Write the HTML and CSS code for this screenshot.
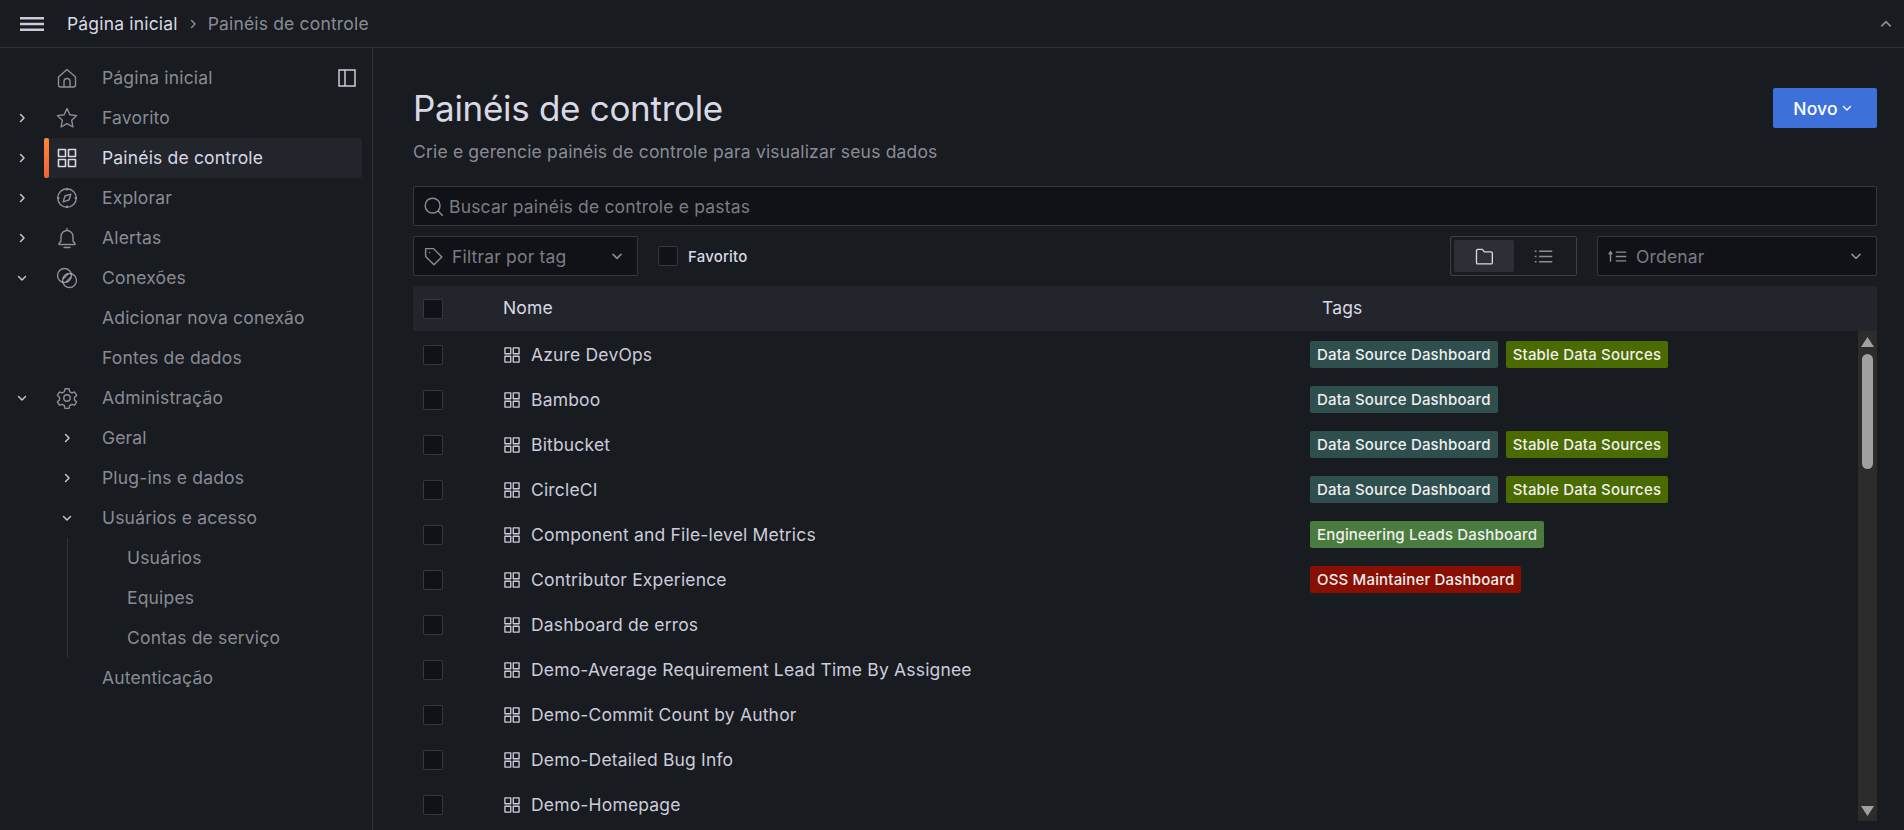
FILE: index.html
```html
<!DOCTYPE html>
<html lang="pt-BR">
  <head>
    <meta charset="UTF-8" />
    <title>Painéis de controle</title>
    <link rel="stylesheet" href="styles.css">
  </head>
  <body>
    <svg class="defs" width="0" height="0">
      <symbol id="i-apps" viewBox="0 0 24 24"><path d="M3.500 3.500h7v7h-7zM13.500 3.500h7v7h-7zM3.500 13.500h7v7h-7zM13.500 13.500h7v7h-7z" fill="none" stroke="currentColor" stroke-width="1.600" stroke-linejoin="round"/></symbol>
      <symbol id="i-right" viewBox="0 0 24 24"><path d="M9.500 6l6 6-6 6" fill="none" stroke="currentColor" stroke-width="2.400" stroke-linecap="round" stroke-linejoin="round"/></symbol>
      <symbol id="i-down" viewBox="0 0 24 24"><path d="M6 9.500l6 6 6-6" fill="none" stroke="currentColor" stroke-width="2.400" stroke-linecap="round" stroke-linejoin="round"/></symbol>
    </svg>

    <header class="topbar">
      <svg class="burger" viewBox="0 0 24 14"><path d="M0 1.200h24M0 7h24M0 12.800h24" stroke="currentColor" stroke-width="2.400"/></svg>
      <span class="crumb">Página inicial</span>
      <svg class="crumb_sep"><use href="#i-right"/></svg>
      <span class="crumb crumb_last">Painéis de controle</span>
      <svg class="collapse" viewBox="0 0 24 24"><path d="M5 15.500l7-7 7 7" fill="none" stroke="currentColor" stroke-width="2.600"/></svg>
    </header>

    <div class="layout">
      <nav class="sidebar">
        <div class="nav_item">
          <span class="nav_arrow"></span>
          <svg class="nav_icon" viewBox="0 0 24 24"><path d="M3.500 11l8.500-7.500 8.500 7.500v8a2 2 0 0 1-2 2h-13a2 2 0 0 1-2-2zM9 21v-5.500a3 3 0 0 1 6 0V21" fill="none" stroke="currentColor" stroke-width="1.400" stroke-linejoin="round"/></svg>
          <span class="nav_text">Página inicial</span>
          <svg class="dock" viewBox="0 0 18 18"><path d="M1 1h16v16H1zM7 1v16" fill="none" stroke="currentColor" stroke-width="1.500"/></svg>
        </div>
        <div class="nav_item">
          <svg class="nav_arrow"><use href="#i-right"/></svg>
          <svg class="nav_icon" viewBox="0 0 24 24"><path d="M12 2.500l2.900 6.200 6.700.9-4.900 4.700 1.200 6.700-5.900-3.300-5.900 3.300 1.200-6.700-4.900-4.700 6.700-.9z" fill="none" stroke="currentColor" stroke-width="1.400" stroke-linejoin="round"/></svg>
          <span class="nav_text">Favorito</span>
        </div>
        <div class="nav_item active">
          <svg class="nav_arrow"><use href="#i-right"/></svg>
          <svg class="nav_icon"><use href="#i-apps"/></svg>
          <span class="nav_text">Painéis de controle</span>
        </div>
        <div class="nav_item">
          <svg class="nav_arrow"><use href="#i-right"/></svg>
          <svg class="nav_icon" viewBox="0 0 24 24"><circle cx="12" cy="12" r="9.300" fill="none" stroke="currentColor" stroke-width="1.400"/><path d="M15.800 8.200l-1.800 5.800-5.800 1.800 1.800-5.800z" fill="none" stroke="currentColor" stroke-width="1.400" stroke-linejoin="round"/><path d="M12 2.500v2M12 19.500v2M2.500 12h2M19.500 12h2" stroke="currentColor" stroke-width="1.400"/></svg>
          <span class="nav_text">Explorar</span>
        </div>
        <div class="nav_item">
          <svg class="nav_arrow"><use href="#i-right"/></svg>
          <svg class="nav_icon" viewBox="0 0 24 24"><path d="M12 4.500a6 6 0 0 0-6 6V15l-2 2.500v1h16v-1L18 15v-4.500a6 6 0 0 0-6-6zM12 2.500v2M9 21.500h6" fill="none" stroke="currentColor" stroke-width="1.400" stroke-linejoin="round" stroke-linecap="round"/></svg>
          <span class="nav_text">Alertas</span>
        </div>
        <div class="nav_item">
          <svg class="nav_arrow"><use href="#i-down"/></svg>
          <svg class="nav_icon" viewBox="0 0 24 24"><circle cx="9.500" cy="9.500" r="7" fill="none" stroke="currentColor" stroke-width="1.400"/><circle cx="14.500" cy="14.500" r="7" fill="none" stroke="currentColor" stroke-width="1.400"/><path d="M8 13l5-5M11 16l5-5" stroke="currentColor" stroke-width="1.400"/></svg>
          <span class="nav_text">Conexões</span>
        </div>
        <div class="nav_item"><span class="nav_arrow"></span><span class="nav_icon"></span><span class="nav_text">Adicionar nova conexão</span></div>
        <div class="nav_item"><span class="nav_arrow"></span><span class="nav_icon"></span><span class="nav_text">Fontes de dados</span></div>
        <div class="nav_item">
          <svg class="nav_arrow"><use href="#i-down"/></svg>
          <svg class="nav_icon" viewBox="0 0 24 24"><circle cx="12" cy="12" r="3.200" fill="none" stroke="currentColor" stroke-width="1.400"/><path d="M10 2.800h4l.6 2.800 2.300 1.300 2.700-.9 2 3.400-2.100 1.900v2.600l2.100 1.900-2 3.400-2.700-.9-2.300 1.300-.6 2.800h-4l-.6-2.800-2.300-1.300-2.700.9-2-3.400 2.100-1.900v-2.600l-2.100-1.900 2-3.400 2.700.9 2.300-1.300z" fill="none" stroke="currentColor" stroke-width="1.400" stroke-linejoin="round"/></svg>
          <span class="nav_text">Administração</span>
        </div>
        <div class="nav_item"><span class="nav_arrow"></span><svg class="nav_icon sub_arrow"><use href="#i-right"/></svg><span class="nav_text">Geral</span></div>
        <div class="nav_item"><span class="nav_arrow"></span><svg class="nav_icon sub_arrow"><use href="#i-right"/></svg><span class="nav_text">Plug-ins e dados</span></div>
        <div class="nav_item"><span class="nav_arrow"></span><svg class="nav_icon sub_arrow"><use href="#i-down"/></svg><span class="nav_text">Usuários e acesso</span></div>
        <div class="nav_group">
          <div class="nav_item deep"><span class="nav_text">Usuários</span></div>
          <div class="nav_item deep"><span class="nav_text">Equipes</span></div>
          <div class="nav_item deep"><span class="nav_text">Contas de serviço</span></div>
        </div>
        <div class="nav_item"><span class="nav_arrow"></span><span class="nav_icon"></span><span class="nav_text">Autenticação</span></div>
      </nav>

      <main class="content">
        <div class="page_head">
          <div>
            <h1>Painéis de controle</h1>
            <p>Crie e gerencie painéis de controle para visualizar seus dados</p>
          </div>
          <button class="btn_new" type="button">Novo <svg><use href="#i-down"/></svg></button>
        </div>

        <div class="search field">
          <svg class="field_icon" viewBox="0 0 24 24"><circle cx="11" cy="11" r="8.500" fill="none" stroke="currentColor" stroke-width="1.600"/><path d="M17.500 17.500L22 22" stroke="currentColor" stroke-width="1.600" stroke-linecap="round"/></svg>
          <span class="placeholder">Buscar painéis de controle e pastas</span>
        </div>

        <div class="filters">
          <div class="tag_filter field">
            <svg class="field_icon" viewBox="0 0 24 24"><path d="M3 3h9l9.500 9.500-9 9L3 12zM7.500 7.500h.01" fill="none" stroke="currentColor" stroke-width="1.600" stroke-linejoin="round" stroke-linecap="round"/></svg>
            <span class="placeholder">Filtrar por tag</span>
            <svg class="field_caret"><use href="#i-down"/></svg>
          </div>
          <span class="check"></span>
          <span class="fav_label">Favorito</span>
          <div class="view_toggle">
            <span class="view_btn on"><svg class="folder" viewBox="0 0 24 24"><path d="M3 5.500A1.500 1.500 0 0 1 4.500 4H10l2.500 3h8A1.500 1.500 0 0 1 22 8.500V20a1.500 1.500 0 0 1-1.500 1.500h-16A1.500 1.500 0 0 1 3 20z" fill="none" stroke="currentColor" stroke-width="1.600" stroke-linejoin="round"/></svg></span>
            <span class="view_btn"><svg viewBox="0 0 24 24"><path d="M7 6h15M7 12h15M7 18h15M2 6h2M2 12h2M2 18h2" stroke="currentColor" stroke-width="1.600"/></svg></span>
          </div>
          <div class="sort field">
            <svg class="field_icon" viewBox="0 0 24 24"><path d="M4 18V7M2 9.500L4 6.500 6 9.500M10 7h12M10 12h12M10 17h12" fill="none" stroke="currentColor" stroke-width="1.600"/></svg>
            <span class="placeholder">Ordenar</span>
            <svg class="field_caret"><use href="#i-down"/></svg>
          </div>
        </div>

        <div class="table">
          <div class="table_head">
            <span class="row_check"><span class="check"></span></span>
            <span class="head_name">Nome</span>
            <span class="head_tags">Tags</span>
          </div>
          <div class="table_body">
            <div class="rows">
              <div class="row"><span class="row_check"><span class="check"></span></span><span class="row_name"><svg><use href="#i-apps"/></svg>Azure DevOps</span><span class="row_tags"><span class="tag tag_source">Data Source Dashboard</span><span class="tag tag_stable">Stable Data Sources</span></span></div>
              <div class="row"><span class="row_check"><span class="check"></span></span><span class="row_name"><svg><use href="#i-apps"/></svg>Bamboo</span><span class="row_tags"><span class="tag tag_source">Data Source Dashboard</span></span></div>
              <div class="row"><span class="row_check"><span class="check"></span></span><span class="row_name"><svg><use href="#i-apps"/></svg>Bitbucket</span><span class="row_tags"><span class="tag tag_source">Data Source Dashboard</span><span class="tag tag_stable">Stable Data Sources</span></span></div>
              <div class="row"><span class="row_check"><span class="check"></span></span><span class="row_name"><svg><use href="#i-apps"/></svg>CircleCI</span><span class="row_tags"><span class="tag tag_source">Data Source Dashboard</span><span class="tag tag_stable">Stable Data Sources</span></span></div>
              <div class="row"><span class="row_check"><span class="check"></span></span><span class="row_name"><svg><use href="#i-apps"/></svg>Component and File-level Metrics</span><span class="row_tags"><span class="tag tag_leads">Engineering Leads Dashboard</span></span></div>
              <div class="row"><span class="row_check"><span class="check"></span></span><span class="row_name"><svg><use href="#i-apps"/></svg>Contributor Experience</span><span class="row_tags"><span class="tag tag_oss">OSS Maintainer Dashboard</span></span></div>
              <div class="row"><span class="row_check"><span class="check"></span></span><span class="row_name"><svg><use href="#i-apps"/></svg>Dashboard de erros</span></div>
              <div class="row"><span class="row_check"><span class="check"></span></span><span class="row_name"><svg><use href="#i-apps"/></svg>Demo-Average Requirement Lead Time By Assignee</span></div>
              <div class="row"><span class="row_check"><span class="check"></span></span><span class="row_name"><svg><use href="#i-apps"/></svg>Demo-Commit Count by Author</span></div>
              <div class="row"><span class="row_check"><span class="check"></span></span><span class="row_name"><svg><use href="#i-apps"/></svg>Demo-Detailed Bug Info</span></div>
              <div class="row"><span class="row_check"><span class="check"></span></span><span class="row_name"><svg><use href="#i-apps"/></svg>Demo-Homepage</span></div>
            </div>
            <div class="scrollbar">
              <svg class="scroll_arrow" viewBox="0 0 13 10"><path d="M6.500 0L13 10H0z" fill="currentColor"/></svg>
              <span class="scroll_thumb"></span>
              <svg class="scroll_arrow scroll_down" viewBox="0 0 13 10"><path d="M0 0h13L6.500 10z" fill="currentColor"/></svg>
            </div>
          </div>
        </div>
      </main>
    </div>
  </body>
</html>
```

FILE: styles.css
```css
* {
  box-sizing: border-box;
}

html,
body {
  height: 100%;
}

body {
  margin: 0;
  overflow: hidden;
  background-color: rgb(24, 27, 31);
  color: rgb(204, 204, 220);
  font-family: Inter, "Noto Sans", sans-serif;
  font-size: 17.5px;
  letter-spacing: 0.01em;
}

.defs {
  position: absolute;
}

svg {
  display: block;
  flex: none;
}

/* top bar */
.topbar {
  display: flex;
  align-items: center;
  height: 48px;
  padding: 0 10px 0 20px;
  border-bottom: 1px solid rgba(204, 204, 220, 0.12);
}

.burger {
  width: 24px;
  height: 14px;
  margin-right: 23px;
}

.crumb {
  color: rgb(217, 217, 230);
}

.crumb_last {
  color: rgba(204, 204, 220, 0.65);
}

.crumb_sep {
  width: 14px;
  height: 14px;
  margin: 0 8px 0 8px;
  color: rgba(204, 204, 220, 0.65);
}

.collapse {
  width: 16px;
  height: 16px;
  margin-left: auto;
  color: rgba(204, 204, 220, 0.65);
}

.layout {
  display: flex;
  height: calc(100% - 48px);
}

/* side menu */
.sidebar {
  width: 373px;
  flex: none;
  padding: 10px 10px 0 0;
  border-right: 1px solid rgba(204, 204, 220, 0.12);
  color: rgba(204, 204, 220, 0.65);
}

.nav_item {
  position: relative;
  display: flex;
  align-items: center;
  height: 40px;
  margin-left: 15px;
  border-radius: 2px;
}

.nav_text {
  margin-bottom: 2px;
}

.nav_arrow {
  width: 14px;
  height: 14px;
  margin-right: 26px;
  color: rgb(204, 204, 220);
}

.nav_icon {
  width: 24px;
  height: 24px;
  margin-right: 23px;
}

.sub_arrow {
  padding: 5px;
  color: rgb(204, 204, 220);
}

.dock {
  width: 18px;
  height: 18px;
  margin-left: auto;
  margin-right: 6px;
  color: rgb(204, 204, 220);
}

.nav_item.active {
  margin-left: 44px;
  background-color: rgb(34, 37, 43);
  color: rgb(217, 217, 230);
}

.nav_item.active .nav_arrow {
  position: absolute;
  left: -29px;
}

.nav_item.active .nav_icon {
  margin-left: 11px;
}

.nav_item.active::before {
  content: "";
  width: 5px;
  height: 100%;
  position: absolute;
  left: 0;
  border-radius: 2px;
  background-image: linear-gradient(0deg, rgb(245, 95, 62), rgb(255, 136, 51));
}

.nav_group {
  margin-left: 67px;
  border-left: 1px solid rgba(204, 204, 220, 0.12);
}

.nav_item.deep {
  margin-left: 0;
  padding-left: 59px;
}

/* page */
.content {
  flex: 1;
  min-width: 0;
  display: flex;
  flex-direction: column;
  padding: 0 27px 9px 40px;
}

.page_head {
  display: flex;
  justify-content: space-between;
  height: 138px;
  padding-top: 39px;
}

h1 {
  margin: 0;
  font-size: 35px;
  font-weight: 400;
  line-height: 42px;
  letter-spacing: -0.3px;
  color: rgb(217, 217, 230);
}

.page_head p {
  margin: 12px 0 0;
  line-height: 22px;
  color: rgba(204, 204, 220, 0.65);
}

.btn_new {
  display: flex;
  align-items: center;
  justify-content: center;
  gap: 2px;
  width: 104px;
  height: 40px;
  margin-top: 1px;
  padding: 0 3px 0 0;
  border: none;
  border-radius: 2px;
  background-color: rgb(61, 113, 217);
  color: white;
  font-family: inherit;
  font-size: 17.5px;
  font-weight: 500;
  letter-spacing: inherit;
}

.btn_new svg {
  width: 14px;
  height: 14px;
}

.field {
  display: flex;
  align-items: center;
  height: 40px;
  padding: 0 12px 0 9px;
  border: 1px solid rgba(204, 204, 220, 0.2);
  border-radius: 2px;
  background-color: rgb(17, 18, 23);
  color: rgba(204, 204, 220, 0.65);
}

.placeholder {
  color: rgba(204, 204, 220, 0.58);
}

.field_icon {
  width: 21px;
  height: 21px;
  margin-right: 8px;
}

.search .field_icon {
  margin-right: 5px;
}

.field_caret {
  width: 16px;
  height: 16px;
  margin-left: auto;
}

.filters {
  display: flex;
  align-items: center;
  margin-top: 10px;
}

.tag_filter {
  width: 225px;
}

.check {
  display: block;
  width: 20px;
  height: 20px;
  border: 1px solid rgba(204, 204, 220, 0.2);
  border-radius: 2px;
  background-color: rgb(17, 18, 23);
}

.filters .check {
  margin-left: 20px;
}

.fav_label {
  margin-left: 10px;
  font-size: 15px;
  font-weight: 500;
  color: rgb(217, 217, 230);
}

.view_toggle {
  display: flex;
  width: 127px;
  height: 40px;
  margin-left: auto;
  padding: 3px;
  border: 1px solid rgba(204, 204, 220, 0.2);
  border-radius: 2px;
}

.view_btn {
  display: flex;
  align-items: center;
  justify-content: center;
  width: 60px;
  border-radius: 2px;
  color: rgba(204, 204, 220, 0.65);
}

.view_btn.on {
  background-color: rgb(44, 47, 53);
  color: rgb(217, 217, 230);
}

.view_btn svg {
  width: 21px;
  height: 21px;
}

.view_btn .folder {
  width: 20px;
  height: 20px;
}

.sort {
  width: 280px;
  margin-left: 20px;
}

/* table */
.table {
  flex: 1;
  min-height: 0;
  display: flex;
  flex-direction: column;
  margin-top: 10px;
}

.table_head {
  display: flex;
  align-items: center;
  height: 45px;
  flex: none;
  background-color: rgb(34, 37, 43);
  color: rgb(217, 217, 230);
}

.row_check {
  width: 90px;
  flex: none;
  padding-left: 10px;
}

.head_name {
  width: 807px;
  flex: none;
  margin-bottom: 2px;
}

.head_tags {
  padding-left: 12px;
  margin-bottom: 2px;
}

.table_body {
  flex: 1;
  min-height: 0;
  display: flex;
}

.rows {
  flex: 1;
  min-width: 0;
  padding-top: 1px;
  overflow: hidden;
}

.row {
  display: flex;
  align-items: center;
  height: 45px;
}

.row_name {
  display: flex;
  align-items: center;
  gap: 9px;
  width: 807px;
  flex: none;
}

.row_name svg {
  width: 20px;
  height: 20px;
  margin-left: -1px;
}

.row_tags {
  display: flex;
  gap: 8px;
}

.tag {
  height: 27px;
  padding: 0 7px;
  border-radius: 2px;
  color: rgb(240, 240, 240);
  font-size: 15px;
  font-weight: 500;
  line-height: 27px;
}

.tag_source {
  background-color: rgb(47, 79, 79);
}

.tag_stable {
  background-color: rgb(73, 107, 0);
}

.tag_leads {
  background-color: rgb(74, 124, 63);
}

.tag_oss {
  background-color: rgb(137, 15, 2);
}

/* list scrollbar */
.scrollbar {
  display: flex;
  flex-direction: column;
  align-items: center;
  width: 19px;
  flex: none;
  padding: 6px 0 5px;
  background-color: rgb(44, 44, 44);
  color: rgb(160, 160, 160);
}

.scroll_arrow {
  width: 13px;
  height: 10px;
}

.scroll_thumb {
  width: 11px;
  height: 115px;
  margin-top: 7px;
  border-radius: 6px;
  background-color: rgb(160, 160, 160);
}

.scroll_down {
  margin-top: auto;
}
```
